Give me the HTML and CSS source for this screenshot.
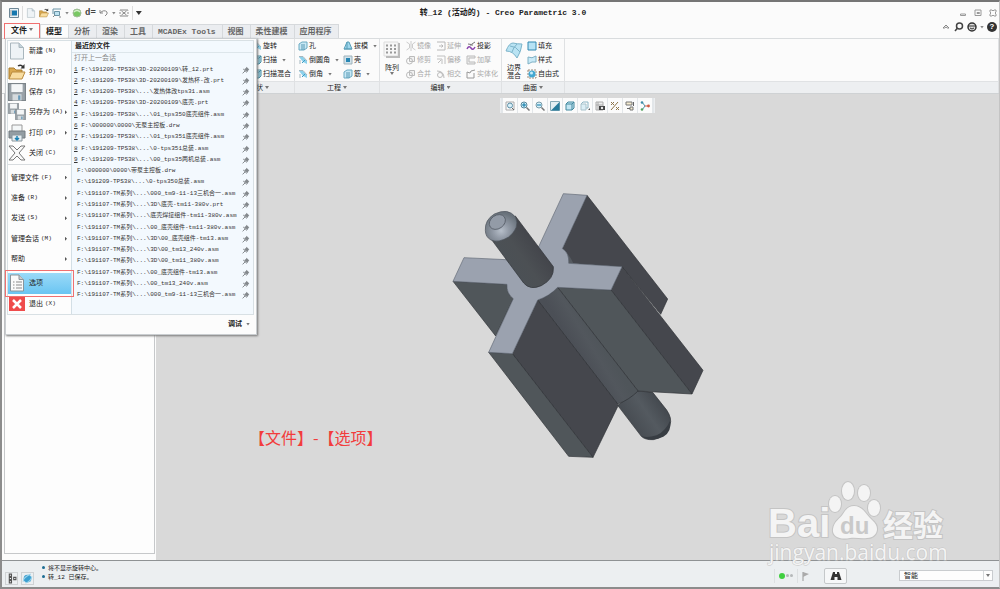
FILE: index.html
```html
<!DOCTYPE html>
<html lang="zh-CN">
<head>
    <meta charset="UTF-8">
    <meta name="viewport" content="width=device-width, initial-scale=1.0">
    <title>转_12 (活动的) - Creo Parametric 3.0</title>
    <link rel="stylesheet" href="styles.css">
</head>
<body>

<!-- Shared icons -->
<svg class="sprite" aria-hidden="true">
    <symbol id="pin" viewBox="0 0 8 8"><path d="M4.500 .8 7.300 3.400 6.500 3.900 5.600 5.900 2.100 3.300 4 2.100z" fill="#858a8e"/><path d="M.6 7.300 3.600 4.500M1.200 3 5 6.500" stroke="#858a8e"/></symbol>
    <symbol id="page" viewBox="0 0 16 18"><path d="M1.500 1H10l4.500 4.500V17h-13z" fill="#eef3f6" stroke="#a9b6bd"/><path d="M10 1v4.500h4.500" fill="#c4d3db" stroke="#a9b6bd"/></symbol>
    <symbol id="folder" viewBox="0 0 18 18"><path d="M1 16V5h5l2 2h6v3" fill="#d9a950" stroke="#a97c2f"/><path d="M1 16 4 9h13l-3 7z" fill="#f8dda0" stroke="#b98b3e"/><path d="M10 3q3-2 5 1" fill="none" stroke="#333" stroke-width="1.500"/><path d="M16.500 1v4.500h-4z" fill="#333"/></symbol>
    <symbol id="floppy" viewBox="0 0 16 16"><path d="M.5.5h15v15h-15z" fill="#9aa2a8" stroke="#7d858a"/><path d="M3 1h10v7H3z" fill="#f4f6f7"/><path d="M4 10h8v5.500H4z" fill="#d5dadd"/><path d="M9 11h2v4H9z" fill="#6799b8"/></symbol>
    <symbol id="regen" viewBox="0 0 10 10"><circle cx="5" cy="5" r="4" fill="#79c863" stroke="#a4bd9b"/><path d="M2 4q3-3 6 0" stroke="#d6f0cc" fill="none" stroke-width="1.500"/></symbol>
    <symbol id="box" viewBox="0 0 10 10"><path d="M1 3 3 1h6v6L7 9H1z" fill="#c3e6f3" stroke="#45899e"/><path d="M1 3h6v6M7 3l2-2" fill="none" stroke="#45899e"/></symbol>
    <symbol id="hole" viewBox="0 0 10 10"><path d="M1 3 4 1h5v6L6 9H1z" fill="#c8e8f5" stroke="#6aaac2"/><path d="M4 3v6M6 3v6" stroke="#5598b4"/></symbol>
    <symbol id="round" viewBox="0 0 10 10"><path d="M1 2h4l4 4v3L5 7z" fill="#8dd1ec"/><path d="M1 1.500h4L9 6M2 5v4" fill="none" stroke="#a5b7be"/><path d="M4 8 7 5" stroke="#3c9cc4"/></symbol>
    <symbol id="draft" viewBox="0 0 10 10"><path d="M1 8 4 1h2l3 7z" fill="#9dd6ed" stroke="#5b9fb8"/><path d="M4 1v7M1 8h8" stroke="#5b9fb8"/></symbol>
    <symbol id="shell" viewBox="0 0 10 10"><path d="M1 1h8v8H1z" fill="#d2e3eb" stroke="#9fb2bb"/><path d="M3 3h4v4H3z" fill="#2887b4"/></symbol>
    <symbol id="mirror" viewBox="0 0 10 10"><path d="M5 0v10M.5 1 3.500 3v4l-3 2M9.500 1 6.500 3v4l3 2" fill="none" stroke="#ccc"/></symbol>
    <symbol id="trim" viewBox="0 0 10 10"><path d="M3.500 1.500h5v5h-5z" fill="#f0f0f0" stroke="#bbb"/><circle cx="3.500" cy="6" r="3" fill="none" stroke="#bbb"/></symbol>
    <symbol id="extend" viewBox="0 0 10 10"><path d="M1 1h8v8H1M3 5h4M5.500 3.500 7 5 5.500 6.500" fill="none" stroke="#b8b8b8"/></symbol>
    <symbol id="offset" viewBox="0 0 10 10"><path d="M1 1h8v8M1 4h5v5M2 8l3-3" fill="none" stroke="#c0c0c0"/></symbol>
    <symbol id="cross" viewBox="0 0 10 10"><path d="M1 2q7 0 7 7" fill="none" stroke="#bbb"/><circle cx="4" cy="6" r="2.500" fill="none" stroke="#bbb"/></symbol>
    <symbol id="project" viewBox="0 0 10 10"><path d="M1 8q2-4 4-1t4-1" fill="none" stroke="#8c46b0" stroke-width="1.500"/><path d="M2 3q3 2 7-2M7 4H4" fill="none" stroke="#777"/></symbol>
    <symbol id="thicken" viewBox="0 0 10 10"><path d="M9 1H1v8h8V7H3V3h6z" fill="#eee" stroke="#bbb"/></symbol>
    <symbol id="solid" viewBox="0 0 10 10"><path d="M1 3v6h7V4M1 3l3 1 1-2 4-1" fill="none" stroke="#999"/></symbol>
    <symbol id="fill" viewBox="0 0 10 10"><path d="M1 1h8v8H1z" fill="#b6e2f5" stroke="#3389b1"/></symbol>
    <symbol id="style" viewBox="0 0 10 10"><path d="M1 2q4 2 8-1v6q-4-1-8 2z" fill="#c9eaf7" stroke="#7fb0c4"/></symbol>
    <symbol id="free" viewBox="0 0 10 10"><path d="M1 1h8v8H1z" fill="none" stroke="#9a8877" stroke-dasharray="2 1"/><circle cx="5" cy="5" r="3.500" fill="#45a8d2"/><circle cx="4.500" cy="4" r="1.500" fill="#c9edfa"/></symbol>
    <symbol id="grid" viewBox="0 0 18 18"><path d="M1 1h14v14H1z" fill="#f7f7f7" stroke="#ddd"/><path d="M16 2v14H3" fill="none" stroke="#bbb" stroke-width="2"/><path d="M3 4.500h11M3 8h11M3 11.500h11" stroke="#999" stroke-width="2" stroke-dasharray="2 2"/></symbol>
    <symbol id="boundary" viewBox="0 0 18 18"><path d="M1 10Q4 2 8 2q4 1 9 1-1 8-5 14-4-7-11-7z" fill="#b9e3f3" stroke="#7cb4ca"/><path d="M12 3q-4 4-5 8M5 5q6 0 10 6" fill="none" stroke="#7cb4ca"/></symbol>
    <symbol id="zoomin" viewBox="0 0 10 10"><circle cx="4" cy="4" r="3" fill="#d8f0f9" stroke="#56889d"/><path d="M6.500 6.500 9.500 9.500" stroke="#777" stroke-width="1.500"/><path d="M4 2v4M2 4h4" stroke="#0878a7"/></symbol>
    <symbol id="zoomout" viewBox="0 0 10 10"><circle cx="4" cy="4" r="3" fill="#d8f0f9" stroke="#789ba9"/><path d="M6.500 6.500 9.500 9.500" stroke="#777" stroke-width="1.500"/><path d="M2 4h4" stroke="#0878a7"/></symbol>
    <symbol id="refit" viewBox="0 0 10 10"><path d="M1 1h8v8H1z" fill="none" stroke="#aaa"/><circle cx="5" cy="4.500" r="2.500" fill="#d8f0f9" stroke="#5b8ea5"/><path d="M7 7l2 2" stroke="#666"/></symbol>
    <symbol id="repaint" viewBox="0 0 10 10"><path d="M.5.5h9v9h-9z" fill="#e3eff3" stroke="#86aab7"/><path d="M9.500 1v8.500H1z" fill="#267b9b"/></symbol>
    <symbol id="views" viewBox="0 0 10 10"><path d="M1 3 3 1h5v6H6" fill="none" stroke="#8db6c5"/><path d="M1 3h5v6H1z" fill="#dceef5" stroke="#aac3cc"/><path d="M8 9h2V7z" fill="#555"/></symbol>
    <symbol id="camera" viewBox="0 0 10 10"><path d="M1 1h7v8H1zM1 4h7M3 1v8" fill="#eee" stroke="#aaa"/><path d="M4 5h6v4H4z" fill="#444"/><circle cx="7" cy="7" r="1.200" fill="#eee"/></symbol>
    <symbol id="datum" viewBox="0 0 10 10"><path d="M1 9 8 1M1 1l3 3M1 4l3-3M6 6l3 3M6 9l3-3" stroke="#8d7245" fill="none"/></symbol>
    <symbol id="notes" viewBox="0 0 10 10"><path d="M1 1h6v3H1zM5 6h3v3H5z" fill="#f5ecd0" stroke="#777"/><path d="M8.500 1v4M2 7.500h3" stroke="#666"/></symbol>
    <symbol id="spin" viewBox="0 0 10 10"><path d="M2 1 5 5 2 9" fill="none" stroke="#4e93a8"/><path d="M5 5h4" stroke="#cf5a41"/><circle cx="2" cy="1.500" r="1.300" fill="#3f8ca8"/><circle cx="2" cy="8.500" r="1.300" fill="#53a15f"/><circle cx="8.500" cy="5" r="1.400" fill="#cf5a41"/></symbol>
</svg>

<div class="app">
    <header class="titlebar">
        <div class="quick">
            <button aria-label="窗口"><svg viewBox="0 0 10 10"><path d="M.5.5h9v9h-9z" fill="#e9f1f5" stroke="#6e8796"/><path d="M3 2.500h5v5H3z" fill="#1577ae"/><path d="M2 2v6" stroke="#999"/></svg></button>
            <i class="rule"></i>
            <button aria-label="新建"><svg><use href="#page"/></svg></button>
            <button aria-label="打开"><svg><use href="#folder"/></svg></button>
            <button class="drop" aria-label="保存"><svg viewBox="0 0 10 10"><path d="M1 1h8M1 1v5M2.500 3.500h5v4h-5z" fill="#bfe2f0" stroke="#6b94a6"/><path d="M1 9l2-2M7 9h2" stroke="#888"/></svg></button>
            <button aria-label="重新生成"><svg><use href="#regen"/></svg></button>
            <button class="dim" aria-label="尺寸">d=</button>
            <button class="drop" aria-label="撤消"><svg viewBox="0 0 10 10"><path d="M1 2v3h3M1 5q4-4 7-1 1 2-2 4" fill="none" stroke="#888"/></svg></button>
            <button aria-label="关闭窗口"><svg viewBox="0 0 10 10"><path d="M1 2.500V2h8v.5M1 7.500V8h8v-.5M2.500 3l5 4M7.500 3l-5 4M1 4v2M9 4v2" fill="none" stroke="#888"/></svg></button>
            <i class="rule"></i>
            <button class="arrow dark" aria-label="自定义"></button>
        </div>
        <h1>转_12 (活动的) - Creo Parametric 3.0</h1>
        <div class="window-btns">
            <button aria-label="最小化"><svg viewBox="0 0 8 8"><path d="M1.500 5h5v1.500h-5z" fill="none" stroke="#999"/></svg></button>
            <button aria-label="最大化"><svg viewBox="0 0 8 8"><path d="M1 1h6v5.500H1zM3 3.500h2.500v1H3z" fill="none" stroke="#999"/></svg></button>
            <button aria-label="关闭"><svg viewBox="0 0 8 8"><path d="M1 1h2l1 1 1-1h2v2L6 4l1 1v2H5L4 6 3 7H1V5l1-1-1-1z" fill="none" stroke="#999"/></svg></button>
        </div>
    </header>

    <nav class="tabs">
        <button class="file-tab marked">文件<span class="arrow"></span></button>
        <button class="tab active">模型</button>
        <button class="tab">分析</button>
        <button class="tab">渲染</button>
        <button class="tab">工具</button>
        <button class="tab">MCADEx Tools</button>
        <button class="tab">视图</button>
        <button class="tab">柔性建模</button>
        <button class="tab last">应用程序</button>
        <div class="help">
            <button aria-label="折叠"><svg viewBox="0 0 10 10"><path d="M2 6 5 3l3 3H6.500L5 5 3.500 6z" fill="none" stroke="#888"/></svg></button>
            <button aria-label="搜索"><svg viewBox="0 0 10 10"><circle cx="5.500" cy="4" r="3" fill="none" stroke="#444" stroke-width="1.500"/><path d="M3.500 6 1 9" stroke="#444" stroke-width="1.500"/></svg></button>
            <button class="drop" aria-label="学习"><svg viewBox="0 0 10 10"><circle cx="5" cy="5" r="4" fill="#ddd" stroke="#333" stroke-width="1.500"/><path d="M1 4h8M3 6q2 2 4 0" fill="none" stroke="#333"/></svg></button>
            <button class="round-help" aria-label="帮助">?</button>
        </div>

        <!-- File menu -->
        <section class="file-menu">
            <div class="menu-body">
                <div class="commands">
                    <button><svg><use href="#page"/></svg>新建 <u>(N)</u></button>
                    <button><svg><use href="#folder"/></svg>打开 <u>(O)</u></button>
                    <button><svg><use href="#floppy"/></svg>保存 <u>(S)</u></button>
                    <button class="sub"><svg viewBox="0 0 18 18"><use href="#floppy" width="11" height="11"/><use href="#floppy" x="7" y="6" width="11" height="11"/></svg>另存为<u>(A)</u></button>
                    <button class="sub"><svg viewBox="0 0 18 18"><path d="M4 1h10v7H4z" fill="#f4f7f8" stroke="#999"/><path d="M1 7h16v7H1z" fill="#939da3" stroke="#737b80"/><path d="M4 11h10v6H4z" fill="#e5edf1" stroke="#8a969c"/><path d="M9 12v4M7 14l2 2 2-2" stroke="#1c82b4" fill="none" stroke-width="1.500"/></svg>打印 <u>(P)</u></button>
                    <button><svg viewBox="0 0 18 18"><path d="M1 2h4l4 4 4-4h4l-6 7 6 7h-4l-4-4-4 4H1l6-7z" fill="#fafafa" stroke="#777"/></svg>关闭 <u>(C)</u></button>
                    <hr>
                    <button class="sub plain">管理文件 <u>(F)</u></button>
                    <button class="sub plain">准备 <u>(R)</u></button>
                    <button class="sub plain">发送 <u>(S)</u></button>
                    <button class="sub plain">管理会话 <u>(M)</u></button>
                    <button class="sub plain">帮助</button>
                    <hr>
                    <button class="selected marked"><svg viewBox="0 0 16 18"><path d="M1.500 1H10l4.500 4.500V17h-13z" fill="#fafafa" stroke="#8a959b"/><path d="M10 1v4.500h4.500" fill="#ccc" stroke="#8a959b"/><path d="M4 8h1.500M4 11h1.500M4 14h1.500M7 8h6M7 11h6M7 14h6" stroke="#8b8b8b"/></svg>选项</button>
                    <button><svg viewBox="0 0 18 18"><path d="M1 2h16v14H1z" fill="#ef4c4c"/><path d="m5 5 8 8M13 5l-8 8" stroke="#fff" stroke-width="2.500"/></svg>退出 <u>(X)</u></button>
                </div>
                <div class="recent">
                    <h2>最近的文件</h2>
                    <p>打开上一会话</p>
                    <ul>
                        <li><a href="#"><u>1</u> F:\191209-TPS38\3D-20200109\转_12.prt</a><svg><use href="#pin"/></svg></li>
                        <li><a href="#"><u>2</u> F:\191209-TPS38\3D-20200109\发热杯-改.prt</a><svg><use href="#pin"/></svg></li>
                        <li><a href="#"><u>3</u> F:\191209-TPS38\...\发热体改tps31.asm</a><svg><use href="#pin"/></svg></li>
                        <li><a href="#"><u>4</u> F:\191209-TPS38\3D-20200109\底壳.prt</a><svg><use href="#pin"/></svg></li>
                        <li><a href="#"><u>5</u> F:\191209-TPS38\...\01_tps350底壳组件.asm</a><svg><use href="#pin"/></svg></li>
                        <li><a href="#"><u>6</u> F:\000000\0000\无泵主控板.drw</a><svg><use href="#pin"/></svg></li>
                        <li><a href="#"><u>7</u> F:\191209-TPS38\...\01_tps351底壳组件.asm</a><svg><use href="#pin"/></svg></li>
                        <li><a href="#"><u>8</u> F:\191209-TPS38\...\0-tps351总装.asm</a><svg><use href="#pin"/></svg></li>
                        <li><a href="#"><u>9</u> F:\191209-TPS38\...\00_tps35两机总装.asm</a><svg><use href="#pin"/></svg></li>
                        <li class="more"><a href="#">F:\000000\0000\带泵主控板.drw</a><svg><use href="#pin"/></svg></li>
                        <li class="more"><a href="#">F:\191209-TPS38\...\0-tps350总装.asm</a><svg><use href="#pin"/></svg></li>
                        <li class="more"><a href="#">F:\191107-TM系列\...\000_tm9-11-13三机合一.asm</a><svg><use href="#pin"/></svg></li>
                        <li class="more"><a href="#">F:\191107-TM系列\...\3D\底壳-tm11-380v.prt</a><svg><use href="#pin"/></svg></li>
                        <li class="more"><a href="#">F:\191107-TM系列\...\底壳焊接组件-tm11-380v.asm</a><svg><use href="#pin"/></svg></li>
                        <li class="more"><a href="#">F:\191107-TM系列\...\00_底壳组件-tm11-380v.asm</a><svg><use href="#pin"/></svg></li>
                        <li class="more"><a href="#">F:\191107-TM系列\...\3D\00_底壳组件-tm13.asm</a><svg><use href="#pin"/></svg></li>
                        <li class="more"><a href="#">F:\191107-TM系列\...\3D\00_tm13_240v.asm</a><svg><use href="#pin"/></svg></li>
                        <li class="more"><a href="#">F:\191107-TM系列\...\3D\00_tm11_380v.asm</a><svg><use href="#pin"/></svg></li>
                        <li class="more"><a href="#">F:\191107-TM系列\...\00_底壳组件-tm13.asm</a><svg><use href="#pin"/></svg></li>
                        <li class="more"><a href="#">F:\191107-TM系列\...\00_tm13_240v.asm</a><svg><use href="#pin"/></svg></li>
                        <li class="more"><a href="#">F:\191107-TM系列\...\000_tm9-11-13三机合一.asm</a><svg><use href="#pin"/></svg></li>
                    </ul>
                </div>
            </div>
            <button class="debug">调试 <span class="arrow"></span></button>
        </section>
    </nav>

    <section class="ribbon">
        <div class="group hidden-start"></div>
        <div class="group shape">
            <div class="tools">
                <div class="col">
                    <button><svg><use href="#round"/></svg>旋转</button>
                    <button><svg><use href="#box"/></svg>扫描<span class="arrow"></span></button>
                    <button><svg><use href="#box"/></svg>扫描混合</button>
                </div>
            </div>
            <button class="caption">形状<span class="arrow"></span></button>
        </div>
        <div class="group engineering">
            <div class="tools">
                <div class="col">
                    <button><svg><use href="#hole"/></svg>孔</button>
                    <button><svg><use href="#round"/></svg>倒圆角<span class="arrow"></span></button>
                    <button><svg><use href="#round"/></svg>倒角<span class="arrow"></span></button>
                </div>
                <div class="col">
                    <button><svg><use href="#draft"/></svg>拔模<span class="arrow"></span></button>
                    <button><svg><use href="#shell"/></svg>壳</button>
                    <button><svg><use href="#hole"/></svg>筋<span class="arrow"></span></button>
                </div>
            </div>
            <button class="caption">工程<span class="arrow"></span></button>
        </div>
        <div class="group editing">
            <div class="tools">
                <button class="big"><svg><use href="#grid"/></svg>阵列<span class="arrow"></span></button>
                <div class="col">
                    <button disabled><svg><use href="#mirror"/></svg>镜像</button>
                    <button disabled><svg><use href="#trim"/></svg>修剪</button>
                    <button disabled><svg><use href="#trim"/></svg>合并</button>
                </div>
                <div class="col">
                    <button disabled><svg><use href="#extend"/></svg>延伸</button>
                    <button disabled><svg><use href="#offset"/></svg>偏移</button>
                    <button disabled><svg><use href="#cross"/></svg>相交</button>
                </div>
                <div class="col">
                    <button><svg><use href="#project"/></svg>投影</button>
                    <button disabled><svg><use href="#thicken"/></svg>加厚</button>
                    <button disabled><svg><use href="#solid"/></svg>实体化</button>
                </div>
            </div>
            <button class="caption">编辑<span class="arrow"></span></button>
        </div>
        <div class="group surface">
            <div class="tools">
                <button class="big"><svg><use href="#boundary"/></svg>边界<br>混合</button>
                <div class="col">
                    <button><svg><use href="#fill"/></svg>填充</button>
                    <button><svg><use href="#style"/></svg>样式</button>
                    <button><svg><use href="#free"/></svg>自由式</button>
                </div>
            </div>
            <button class="caption">曲面<span class="arrow"></span></button>
        </div>
        <div class="group rest"><div class="tools"></div><div class="caption"></div></div>
    </section>

    <main class="workspace">
        <aside class="tree"></aside>
        <div class="canvas">
            <div class="view-bar">
                <button aria-label="重新调整"><svg><use href="#refit"/></svg></button>
                <button aria-label="放大"><svg><use href="#zoomin"/></svg></button>
                <button aria-label="缩小"><svg><use href="#zoomout"/></svg></button>
                <button aria-label="重画"><svg><use href="#repaint"/></svg></button>
                <button aria-label="显示样式"><svg><use href="#box"/></svg></button>
                <button aria-label="已保存方向"><svg><use href="#views"/></svg></button>
                <button aria-label="视图管理器"><svg><use href="#camera"/></svg></button>
                <button aria-label="基准显示"><svg><use href="#datum"/></svg></button>
                <button aria-label="注释显示"><svg><use href="#notes"/></svg></button>
                <button aria-label="旋转中心"><svg><use href="#spin"/></svg></button>
            </div>

            <!-- Rotor part -->
            <svg class="part" viewBox="0 0 870 870">
                <defs>
                    <linearGradient id="shaft" gradientUnits="userSpaceOnUse" x1="215" y1="250" x2="315" y2="180">
                        <stop offset="0" stop-color="#4b5156"/><stop offset=".5" stop-color="#4c5054"/><stop offset="1" stop-color="#43454b"/>
                    </linearGradient>
                    <linearGradient id="hub" gradientUnits="userSpaceOnUse" x1="440" y1="515" x2="505" y2="475">
                        <stop offset="0" stop-color="#4b4f56"/><stop offset=".6" stop-color="#52575d"/><stop offset="1" stop-color="#4f555a"/>
                    </linearGradient>
                    <linearGradient id="tail" gradientUnits="userSpaceOnUse" x1="600" y1="725" x2="695" y2="660">
                        <stop offset="0" stop-color="#484d53"/><stop offset=".5" stop-color="#545a60"/><stop offset="1" stop-color="#42474d"/>
                    </linearGradient>
                    <radialGradient id="tip" cx=".5" cy=".65" r=".6">
                        <stop offset="0" stop-color="#b7bfca"/><stop offset=".4" stop-color="#949ca8"/><stop offset="1" stop-color="#68717a"/>
                    </radialGradient>
                </defs>
                <g stroke="#2d3035" stroke-width="2" stroke-linejoin="round">
                    <path d="M563 676 624 633 668 637 710 690Q727 715 720 735 708 772 670 779 645 780 634 769z" fill="url(#tail)"/>
                    <path d="M634 768Q650 775 680 766 708 752 720 722 726 755 700 770 660 788 634 768z" fill="#383d43" stroke="none"/>
                    <path d="M471 46 713 357 692 403 576 260 416 250Q418 218 397 206z" fill="#45474d"/>
                    <path d="M397 206Q418 216 416 250L430 250Q420 225 397 206z" fill="#555a60" stroke="none"/>
                    <path d="M69 304 231 313Q230 342 250 356L197 468z" fill="#50565a"/>
                    <path d="M576 260 819 571 786 642 543 330z" fill="#45474d"/>
                    <path d="M383 322 543 330 786 642 624 633z" fill="#50565a"/>
                    <path d="M323 360Q357 349 383 322L624 633Q597 660 563 672z" fill="url(#hub)"/>
                    <path d="M323 360 563 672 563 680 489 832 247 521z" fill="#45474d"/>
                    <path d="M176 517 247 521 489 832 416 829z" fill="#50565a"/>
                    <path d="M400 41 471 46 397 206Q418 218 416 250L576 260 543 330 383 322Q357 349 323 360L247 521 176 517 250 356Q229 340 231 313L69 304 102 233 248 240 326 200z" fill="#9ba2af" stroke="#626975"/>
                    <path d="M184 178 281 309Q300 332 334 317 374 296 370 260L256 108z" fill="url(#shaft)"/>
                    <path d="M166 151Q164 120 193 102 235 82 257 112 270 144 236 171 205 190 183 180 166 171 166 151z" fill="url(#tip)" stroke="#4b525b"/>
                    <ellipse cx="202" cy="126" rx="26" ry="20" transform="rotate(-35 202 126)" fill="#939ba7" stroke="#4b525b"/>
                </g>
            </svg>
            <p class="note">【文件】-【选项】</p>
        </div>
    </main>

    <footer class="status">
        <button class="toggle" aria-label="模型树"><svg viewBox="0 0 10 10"><path d="M3 1h2v2H3zM3 4h2v2H3zM3 7h2v2H3zM7 4h2v2H7z" fill="#fff" stroke="#555"/></svg></button>
        <button class="toggle" aria-label="浏览器"><svg viewBox="0 0 10 10"><circle cx="5" cy="5" r="3.500" fill="#3a9fd0"/><path d="M1 8Q1 4 8 1M3 9q5-1 6-6" fill="none" stroke="#9bd3eb"/></svg></button>
        <ul class="messages">
            <li>将不显示旋转中心。</li>
            <li>转_12 已保存。</li>
        </ul>
        <div class="lights"><i class="on"></i><i></i><i></i></div>
        <svg class="flag" viewBox="0 0 10 10"><path d="M2 1v9" stroke="#999"/><path d="M2 1 8 3 2 6z" fill="#aaa"/></svg>
        <button class="find" aria-label="查找"><svg viewBox="0 0 12 10"><path d="M3 1h2v2h2V1h2l2.500 8h-4V6h-3v3h-4z" fill="#333"/></svg></button>
        <label class="filter"><select aria-label="过滤器"><option>智能</option></select><span class="arrow"></span></label>
    </footer>

    <svg class="watermark" viewBox="0 0 190 90">
        <g fill="#f4f4f4" stroke="#c4c4c4" stroke-width="2" paint-order="stroke">
            <text class="wm-bai" x="5" y="57">Bai</text>
            <ellipse cx="72" cy="24" rx="6" ry="8"/>
            <ellipse cx="85" cy="11" rx="6" ry="9"/>
            <ellipse cx="101" cy="13" rx="6" ry="8"/>
            <ellipse cx="111" cy="28" rx="6" ry="8"/>
            <path d="M91 26C100 26 103 35 109 40 118 47 114 58 104 58 98 59 93 57 87 58 77 60 69 57 70 49 71 41 77 39 80 34 83 29 86 26 91 26z"/>
            <text class="wm-cn" x="120" y="56">经验</text>
            <text class="wm-url" x="6" y="80">jingyan.baidu.com</text>
        </g>
        <text class="wm-du" x="77" y="54">du</text>
    </svg>
</div>

</body>
</html>
```

FILE: styles.css
```css
* {
    box-sizing: border-box;
}
body {
    margin: 0;
    font: 7px/10px "Liberation Mono", "Noto Sans CJK SC", monospace;
    color: #222;
}
button, select {
    font: inherit;
    color: inherit;
    background: none;
    border: none;
    padding: 0;
    margin: 0;
    white-space: nowrap;
}
h1, h2, p, ul {
    margin: 0;
    padding: 0;
    list-style: none;
}
svg {
    display: block;
    flex: none;
}
.sprite {
    position: absolute;
    width: 0;
    height: 0;
}
.app {
    position: relative;
    display: flex;
    flex-direction: column;
    height: 100vh;
    background: #fbfbfb;
    border: 2px solid #8c8c8c;
    border-top-color: #757575;
    border-right: 1px solid #c4c4c4;
    overflow: hidden;
}
.arrow {
    display: inline-block;
    flex: none;
    width: 4px;
    height: 3px;
    background: #777;
    clip-path: polygon(0 0, 100% 0, 50% 100%);
}
.arrow.dark {
    width: 6px;
    height: 4px;
    background: #333;
}
.marked {
    outline: 1px solid #f07070;
}

/* Title bar */
.titlebar {
    display: grid;
    grid-template-columns: 1fr auto 1fr;
    align-items: center;
    height: 22px;
    padding: 0 2px 0 7px;
}
.titlebar h1 {
    font-size: 8px;
    line-height: 12px;
}
.quick, .window-btns, .help {
    display: flex;
    align-items: center;
}
.quick {
    gap: 3px;
}
.quick svg, .help svg {
    width: 10px;
    height: 10px;
}
.rule {
    width: 1px;
    height: 14px;
    background: #ddd;
}
.dim {
    font-size: 9px;
    font-weight: bold;
    color: #444;
}
.drop {
    display: flex;
    align-items: center;
    gap: 3px;
}
.drop::after {
    content: "";
    width: 4px;
    height: 3px;
    background: #888;
    clip-path: polygon(0 0, 100% 0, 50% 100%);
}
.window-btns {
    justify-content: flex-end;
    gap: 7px;
}
.window-btns svg {
    width: 8px;
    height: 8px;
}

/* Tabs */
.tabs {
    position: relative;
    display: flex;
    height: 14px;
    padding-left: 3px;
    font-size: 8px;
}
.file-tab {
    width: 34px;
    font-weight: bold;
}
.file-tab .arrow {
    margin: 0 0 2px 2px;
}
.tab {
    padding: 0 6px 0 5px;
    border-left: 1px solid #d6d9dc;
    border-top: 1px solid #d6d9dc;
    background: #ebedf0;
    font-weight: bold;
    color: #666;
}
.tab.active {
    background: #fcfcfc;
    color: #222;
    margin-left: 1px;
}
.tab.last {
    border-right: 1px solid #d6d9dc;
}
.help {
    position: relative;
    bottom: 4px;
    margin-left: auto;
    padding-right: 2px;
    gap: 3px;
}
.round-help {
    width: 10px;
    height: 10px;
    border-radius: 50%;
    background: #333;
    color: #fff;
    font-weight: bold;
}

/* File menu */
.file-menu {
    position: absolute;
    z-index: 5;
    top: 14px;
    left: 3px;
    width: 252px;
    padding: 1px 2px 1px 1px;
    background: #fcfcfc;
    border: 1px solid #c9cdd0;
    box-shadow: 1px 1px 2px #777;
    font-size: 7px;
}
.menu-body {
    display: flex;
    height: 275px;
    border: 1px solid #d8e0e4;
}
.commands {
    display: flex;
    flex-direction: column;
    width: 63px;
    background: #fdfdfd;
}
.commands button {
    position: relative;
    display: flex;
    flex: 1;
    align-items: center;
    text-align: left;
}
.commands svg {
    width: 18px;
    height: 18px;
    margin: 0 3px 0 0;
}
.commands u {
    margin-left: 2px;
    font-size: 6px;
    text-decoration: none;
}
.commands .plain {
    padding-left: 3px;
}
.commands .sub::after {
    content: "";
    width: 2px;
    height: 4px;
    margin: 0 4px 0 auto;
    background: #555;
    clip-path: polygon(0 0, 100% 50%, 0 100%);
}
.commands hr {
    width: 100%;
    margin: 1px 0 2px;
    border: 0;
    border-top: 1px solid #d8dcdf;
}
.commands .selected {
    background: linear-gradient(#9bdaf8, #6ac5f2);
    outline-offset: 2px;
}
.recent {
    display: flex;
    flex: 1;
    flex-direction: column;
    padding-bottom: 13px;
    background: #f3f9fe;
    border-left: 1px solid #d3dfe6;
}
.recent h2 {
    padding-left: 3px;
    font-size: 7px;
    line-height: 11px;
    border-bottom: 1px solid #dde6eb;
}
.recent p {
    padding-left: 2px;
    line-height: 11px;
    color: #888;
}
.recent ul {
    display: flex;
    flex: 1;
    flex-direction: column;
}
.recent li {
    display: flex;
    flex: 1;
    align-items: center;
    justify-content: space-between;
    padding: 0 3px 0 2px;
    font-size: 6px;
    line-height: 10px;
}
.recent .more {
    padding-left: 5px;
}
.recent a {
    color: #333;
    text-decoration: none;
    white-space: nowrap;
}
.recent svg {
    width: 8px;
    height: 8px;
}
.debug {
    display: flex;
    align-items: center;
    gap: 4px;
    height: 18px;
    margin-left: auto;
    padding-right: 4px;
    font-weight: bold;
}

/* Ribbon */
.ribbon {
    display: flex;
    height: 56px;
    border-top: 1px solid #d9dcde;
    border-bottom: 1px solid #cfd2d4;
}
.group {
    display: flex;
    flex: none;
    flex-direction: column;
    border-right: 1px solid #dfe1e3;
}
.hidden-start {
    width: 222px;
}
.shape {
    width: 71px;
}
.shape .tools {
    justify-content: flex-end;
}
.engineering {
    width: 85px;
}
.editing {
    width: 122px;
}
.surface {
    width: 63px;
}
.group.rest {
    flex: 1;
}
.tools {
    display: flex;
    flex: 1;
    gap: 4px;
    padding: 0 3px;
}
.editing .tools {
    gap: 5px;
}
.col {
    display: flex;
    flex-direction: column;
}
.col button {
    display: flex;
    align-items: center;
    height: 14px;
    gap: 1px;
}
.col svg {
    width: 10px;
    height: 10px;
}
.col .arrow {
    margin-left: 4px;
}
.tools button:disabled {
    color: #aaa;
}
.big {
    display: flex;
    flex-direction: column;
    align-items: center;
    width: 18px;
    padding-top: 2px;
    line-height: 8px;
}
.big svg {
    width: 18px;
    height: 18px;
    margin-bottom: 5px;
}
.caption {
    display: flex;
    align-items: center;
    justify-content: center;
    gap: 2px;
    height: 12px;
    background: #edeff1;
    border-top: 1px solid #e0e2e4;
}

/* Workspace */
.workspace {
    display: flex;
    flex: 1;
    min-height: 0;
    background: #fcfcfc;
}
.tree {
    width: 151px;
    margin: 0 1px 6px 2px;
    background: #fdfdfd;
    border: 1px solid #c6c8ca;
}
.canvas {
    position: relative;
    display: flex;
    flex: 1;
    align-items: flex-start;
    justify-content: center;
    padding-top: 4px;
    background: #d9d9d9;
}
.view-bar {
    display: flex;
    gap: 1px;
    padding: 0 2px;
    background: #e2e6e9;
    border: solid #eceef0;
    border-width: 0 1px;
}
.view-bar button {
    display: grid;
    place-items: center;
    width: 14px;
    height: 15px;
    background: #fbfbfb;
}
.view-bar svg {
    width: 10px;
    height: 10px;
}
.part {
    position: absolute;
    left: 274px;
    top: 86px;
    width: 290px;
    height: 290px;
}
.note {
    position: absolute;
    left: 93px;
    top: 331px;
    font: 16px/24px "Noto Sans CJK SC", sans-serif;
    color: #f23c3c;
}

/* Status bar */
.status {
    display: flex;
    align-items: center;
    gap: 3px;
    height: 27px;
    padding: 3px 6px 0 3px;
    background: #eceff1;
    border-top: 1px solid #8f9294;
}
.toggle {
    align-self: flex-end;
    width: 13px;
    height: 13px;
    margin-bottom: 2px;
    border: 1px solid #cfd2d4;
}
.messages {
    flex: 1;
    align-self: flex-start;
    padding-left: 5px;
    font-size: 6px;
    line-height: 9px;
}
.messages li::before {
    content: "";
    display: inline-block;
    width: 3px;
    height: 3px;
    margin: 0 3px 1px 0;
    border-radius: 50%;
    background: #1c6c93;
}
.lights {
    display: flex;
    align-items: center;
    gap: 1px;
    padding: 4px;
    border-left: 1px solid #dde0e2;
    border-right: 1px solid #dde0e2;
}
.lights i {
    width: 3px;
    height: 3px;
    border-radius: 50%;
    background: #b5b8ba;
}
.lights .on {
    width: 6px;
    height: 6px;
    background: #40cf40;
}
.flag {
    width: 10px;
    height: 10px;
}
.find {
    display: grid;
    place-items: center;
    width: 23px;
    height: 16px;
    margin-left: 10px;
    background: #f6f7f8;
    border: 1px solid #c5c8ca;
    border-radius: 2px;
}
.find svg {
    width: 12px;
    height: 10px;
}
.filter {
    display: flex;
    align-items: center;
    width: 94px;
    height: 11px;
    margin-left: 49px;
    background: #fdfdfd;
    border: 1px solid #c9cccf;
}
.filter select {
    flex: 1;
    height: 9px;
    padding-left: 4px;
    appearance: none;
    border-right: 1px solid #d5d8da;
}
.filter .arrow {
    margin: 0 2px;
}

/* Watermark */
.watermark {
    position: absolute;
    right: 46px;
    bottom: 17px;
    width: 190px;
    height: 90px;
    pointer-events: none;
}
.wm-bai {
    font: bold 40px "Liberation Sans", sans-serif;
}
.wm-du {
    font: bold 24px "Liberation Sans", sans-serif;
    fill: #c9c9c9;
}
.wm-cn {
    font: bold 30px "Noto Sans CJK SC", sans-serif;
}
.wm-url {
    font: 21px "Open Sans", sans-serif;
    stroke-width: 1px;
}
```
